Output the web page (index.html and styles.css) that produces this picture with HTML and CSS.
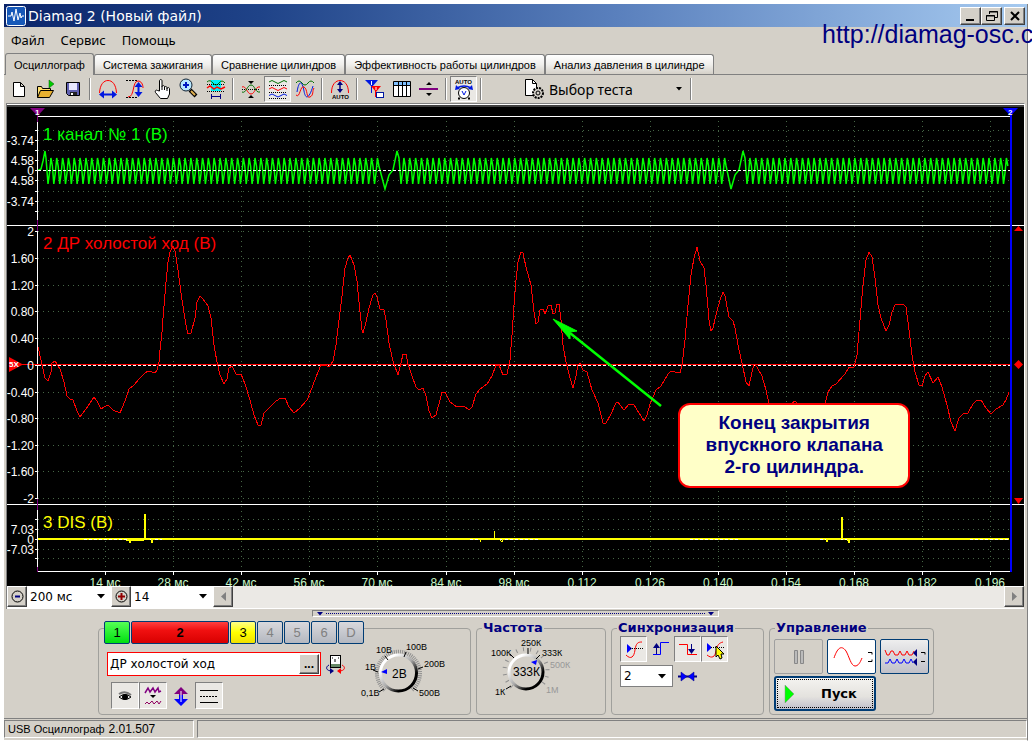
FILE: index.html
```html
<!DOCTYPE html>
<html lang="ru">
<head>
<meta charset="utf-8">
<title>Diamag 2 (Новый файл)</title>
<link rel="stylesheet" href="styles.css">
</head>
<body>
<main class="window">
  <header class="titlebar">
    <svg class="app-icon" width="20" height="20" viewBox="0 0 20 20"><rect x=".5" y=".5" width="19" height="19" rx="2" fill="#1658b8" stroke="#fff"/><path d="M2 10h3l1-4 2 9 2-12 2 11 2-7 1 5 1-2h2" fill="none" stroke="#fff"/></svg>
    <h1 class="title">Diamag 2 (Новый файл)</h1>
    <div class="winbtns">
      <button class="winbtn" aria-label="Свернуть"><svg width="16" height="14"><path d="M3 11h8" stroke="#000" stroke-width="2"/></svg></button>
      <button class="winbtn" aria-label="Восстановить"><svg width="16" height="14" fill="none" stroke="#000"><path d="M5.500 5V2.500h8v6H11M5 3h9M2.500 6.500h8v5h-8zM2 7h9"/></svg></button>
      <button class="winbtn winbtn-close" aria-label="Закрыть"><svg width="16" height="14"><path d="M4 3l8 8M12 3l-8 8" stroke="#000" stroke-width="2"/></svg></button>
    </div>
  </header>
  <a class="site-link" href="#">http://diamag-osc.com</a>

  <nav class="menu">
    <a href="#">Файл</a><a href="#">Сервис</a><a href="#">Помощь</a>
  </nav>

  <div class="tabs" role="tablist">
    <button class="tab tab-active" role="tab" aria-selected="true">Осциллограф</button>
    <button class="tab" role="tab">Система зажигания</button>
    <button class="tab" role="tab">Сравнение цилиндров</button>
    <button class="tab" role="tab">Эффективность работы цилиндров</button>
    <button class="tab" role="tab">Анализ давления в цилиндре</button>
  </div>

  <div class="toolbar">
    <button class="tool" aria-label="Новый"><svg width="22" height="22" viewBox="0 0 22 22"><path d="M5.500 4.500h7l4 4v10h-11zM12.500 4.500v4h4" fill="#fff" stroke="#000"/></svg></button>
    <button class="tool" aria-label="Открыть"><svg width="22" height="22" viewBox="0 0 22 22"><path d="M2.500 19.500v-11h4l1 2h8v3" fill="#ffe070" stroke="#000"/><path d="M2.500 19.500l3-7h13l-4 7z" fill="#e8b030" stroke="#000"/><path d="M14 2l5 4-5 4z" fill="#0c0" stroke="#050" stroke-width=".5"/></svg></button>
    <button class="tool" aria-label="Сохранить"><svg width="22" height="22" viewBox="0 0 22 22"><path d="M4.500 4.500h13v13h-11l-2-2z" fill="#6060b0" stroke="#000"/><path d="M7 5h8v7H7z" fill="#e8e8ff"/><path d="M8 14h7v3H8z" fill="#222"/><path d="M9 15h2v2H9z" fill="#fff"/></svg></button>
    <i class="sep"></i>
    <button class="tool" aria-label="Масштаб по времени"><svg width="22" height="22" viewBox="0 0 22 22" fill="none"><path d="M2.500 15C3 6 7 2.500 11 2.500S19 6 19.500 15" stroke="red"/><path d="M4 16.500h14" stroke="#0018e0" stroke-width="2"/><path d="M2 16.500l5-4v8zM20 16.500l-5-4v8z" fill="#0018e0"/></svg></button>
    <button class="tool" aria-label="Масштаб по уровню"><svg width="22" height="22" viewBox="0 0 22 22" fill="none"><path d="M2 2.500h12M2 19.500h12" stroke="#000" stroke-dasharray="2 1"/><path d="M4 19c7 0 4-16 10-16 3 0 5 3 5 7" stroke="red"/><path d="M14.500 7v9" stroke="#0018e0" stroke-width="2"/><path d="M14.500 4l-4 5h8zM14.500 19l-4-5h8z" fill="#0018e0"/></svg></button>
    <button class="tool" aria-label="Рука"><svg width="22" height="22" viewBox="0 0 22 22"><path d="M8.500 13V3c0-2 2.500-2 2.500 0v6c0-2 2.500-2 2.500 0v1c0-2 2.500-2 2.500 0v1c0-2 2.500-2 2.500 0v5l-2 4.500h-7l-5-6c-1-2 1-3 2-2zM11 9v3M13.500 10v2M16 11v2" fill="#fff" stroke="#000"/></svg></button>
    <button class="tool" aria-label="Лупа"><svg width="22" height="22" viewBox="0 0 22 22"><path d="M12 12l6 6" stroke="#000" stroke-width="4"/><path d="M13 13l4 4" stroke="#e0b050" stroke-width="2"/><circle cx="8" cy="7" r="6" fill="#b8e8ff" stroke="#123"/><path d="M5 7h6M8 4v6" stroke="#0018c0" stroke-width="2"/></svg></button>
    <button class="tool" aria-label="Область"><svg width="22" height="22" viewBox="0 0 22 22" fill="none"><path d="M6 2h10v11H6z" fill="#00f0f8"/><path d="M2 4q3-3 6 1t6 0 6 0" stroke="#007000"/><path d="M2 6.500h18M2 13.500h18" stroke="#000" stroke-dasharray="1 1"/><path d="M2 10l3-2 4 3 3-2 4 2 4-2" stroke="red" stroke-width="1.500"/><path d="M6 18.500h10M6.500 16v5M15.500 16v5" stroke="#000080"/></svg></button>
    <i class="sep"></i>
    <button class="tool" aria-label="Совместить"><svg width="22" height="22" viewBox="0 0 22 22" fill="none"><path d="M8 3h6l-3 3zM8 20h6l-3-3z" fill="#000"/><path d="M2 11.500h18" stroke="#000" stroke-dasharray="1 1"/><path d="M2 9c4-2 5 7 9 7s4-8 9-7" stroke="red"/><path d="M2 14c4 2 5-7 9-7s4 8 9 7" stroke="#007000"/></svg></button>
    <button class="tool tool-pressed" aria-label="Раздельно"><svg width="22" height="22" viewBox="0 0 22 22" fill="none"><path d="M2 4q3-3 6 0t6 0 6 0" stroke="#007000"/><path d="M2 7.500h18M2 14.500h18M2 20.500h18" stroke="#000" stroke-dasharray="1 1"/><path d="M2 11q3-3 6 0t6 0 6 0" stroke="red"/><path d="M2 17.500q3-3 6 0t6 0 6 0" stroke="#0018e0"/></svg></button>
    <button class="tool" aria-label="Наложить"><svg width="22" height="22" viewBox="0 0 22 22" fill="none"><path d="M2 5q3-4 6 0t6 0 6 0" stroke="#007000"/><path d="M3 14c2-12 5-12 7-1s6 5 9-5" stroke="#0018e0"/><path d="M2 17c4 4 4-10 8-8s2 12 6 10 2-6 4-9" stroke="red"/></svg></button>
    <i class="sep"></i>
    <button class="tool" aria-label="Авто"><svg width="22" height="22" viewBox="0 0 22 22" fill="none"><path d="M2.500 15C2.500 6 7 2.500 11 2.500S19.500 6 19.500 15" stroke="red"/><path d="M11 5v8" stroke="#000080" stroke-width="1.500"/><path d="M11 3l-3 4h6zM11 15l-3-4h6z" fill="#000080"/><text x="3" y="21" class="auto-text">AUTO</text></svg></button>
    <i class="sep"></i>
    <button class="tool" aria-label="Маркеры"><svg width="22" height="22" viewBox="0 0 22 22"><path d="M1 2h13L8 9z" fill="#0018e0"/><path d="M7.500 5v10" stroke="#0018e0"/><path d="M7 8h10l-5 6z" fill="red"/><path d="M11.500 10v9" stroke="red"/><path d="M7.500 3v4M12 9v3" stroke="#fff"/><rect x="12.500" y="14.500" width="7" height="5" fill="#fff" stroke="#0018a0"/></svg></button>
    <button class="tool" aria-label="Таблица"><svg width="22" height="22" viewBox="0 0 22 22"><path d="M2.500 3.500h17v15h-17z" fill="#fff" stroke="#000"/><path d="M3 4h16v3H3z" fill="#80c0ff"/><path d="M2 7.500h18M7.500 4v14M11.500 4v14M15.500 4v14" stroke="#000"/></svg></button>
    <button class="tool" aria-label="Разделитель"><svg width="22" height="22" viewBox="0 0 22 22"><path d="M1 11h19" stroke="#800080" stroke-width="2"/><path d="M8 7h6l-3-3zM8 15h6l-3 3z" fill="#000"/></svg></button>
    <i class="sep"></i>
    <button class="tool tool-pressed" aria-label="Авто вольтметр"><svg width="22" height="22" viewBox="0 0 22 22" fill="none"><text x="2" y="6" class="auto-text">AUTO</text><path d="M4 10q7-4 14 0" stroke="#0018e0" stroke-width="1.500"/><path d="M2 12l1-5 4 4zM20 12l-1-5-4 4z" fill="#0018e0"/><circle cx="11" cy="15" r="5.500" fill="#fff" stroke="#000"/><path d="M9 13l2 4 2-4" stroke="#0018e0"/><path d="M5 20.500h2M15 20.500h2" stroke="#000" stroke-width="2"/></svg></button>
    <i class="sep"></i>
    <button class="test-pick"><svg width="22" height="22" viewBox="0 0 22 22"><path d="M2.500 1.500h7l4 4v12h-11z" fill="#fff" stroke="#000"/><path d="M9.500 1.500v4h4" fill="none" stroke="#000"/><circle cx="15" cy="15" r="5" fill="#d4d0c8" stroke="#000" stroke-width="2" stroke-dasharray="2 1"/><circle cx="15" cy="15" r="2" fill="none" stroke="#000"/></svg><span>Выбор теста</span><svg class="test-arrow" width="7" height="4"><path d="M0 0h6L3 3.500z"/></svg></button>
    <i class="sep"></i>
  </div>

  <section class="scope">
    <svg class="plot" viewBox="7 107 1017 479" role="img" aria-label="Осциллограммы">
      <g id="grid"></g>
      <g class="frame">
        <path d="M38 116.500H1010M7 225.500H1024M7 504.500H1024M38 571.500H1010M37.500 121V220M37.500 231V499M37.500 510V567"/>
      </g>
      <g id="ticks"></g>
      <path class="marker-one" d="M30 108H45L37.500 116zM37 116h1v6h-1zM37 220h1v11h-1zM37 499h1v11h-1zM37 567h1v5h-1z"/>
      <text class="marker-num" x="35" y="115">1</text>
      <g class="wave-text">
        <text x="43" y="140" fill="#0f0">1 канал № 1 (В)</text>
        <text x="43" y="249" fill="red">2 ДР холостой ход (В)</text>
        <text x="43" y="528" fill="#ff0">3 DIS (В)</text>
      </g>
      <path id="wave1" class="wave-dense"/>
      <path class="zero" d="M38 170.500H1010"/>
      <path class="zero" d="M38 365.500H1010"/>
      <path class="wave" d="M20 364.500H1010" stroke="red"/>
      <polyline class="wave" stroke="red" points="38,347 41,360 45,378 48,381 51,372 52,363 55,361 60,369 64,382 67,396 70,399 73,400 77,411 80,417 86,409 94,397 97,401 101,409 104,407 108,405 113,410 120,413 125,401 129,389 134,385 140,378 145,373 148,371 152,372 155,373 157,370 159,362 160,350 162,332 163,318 166,282 168,262 170,252 173,246 175,251 178,270 182,300 186,325 188,334 191,333 195,318 197,302 200,296 203,299 208,306 211,318 214,345 217,362 220,375 224,384 227,379 229,368 232,366 236,374 241,374 245,384 250,400 254,415 258,425 261,425 264,413 270,407 276,401 281,398 285,398 289,407 294,413 300,408 307,400 310,393 316,377 321,365 325,365 329,367 333,361 336,345 338,328 342,296 345,268 348,258 350,255 354,265 357,281 360,312 362,330 363,333 366,322 369,308 373,295 375,293 377,297 380,309 384,310 386,320 389,343 393,361 398,375 401,363 403,354 406,354 408,364 411,373 416,387 419,390 423,388 426,396 429,411 432,418 436,415 440,400 442,392 445,392 450,402 457,407 464,406 469,410 472,407 476,394 480,389 487,384 492,376 496,365 499,365 503,375 507,374 510,360 512,335 514,305 516,280 518,262 521,252 523,253 526,267 531,285 534,312 536,324 538,322 540,310 543,309 545,314 547,309 548,306 551,305 553,314 555,313 557,304 559,304 561,320 563,345 566,362 569,374 573,388 576,376 578,365 580,363 583,370 587,372 592,390 598,403 601,415 603,423 606,423 611,414 616,403 618,402 624,410 629,404 634,405 639,413 644,421 647,415 650,404 656,390 661,386 668,374 671,371 675,372 680,373 682,365 685,340 688,305 691,275 694,258 697,247 700,261 704,268 706,285 709,320 711,331 713,328 716,315 720,300 723,292 725,296 729,317 733,321 735,328 738,345 742,363 746,382 749,386 752,372 754,364 757,367 762,376 766,390 769,404 775,412 785,408 795,401 805,412 820,410 825,404 828,392 832,386 836,384 845,374 849,367 854,367 857,355 860,320 863,285 866,260 869,252 872,257 875,278 878,305 881,318 886,331 889,325 892,312 895,305 903,304 906,307 909,330 912,355 915,372 919,385 922,386 925,376 928,372 933,383 938,377 942,387 947,405 951,422 955,431 959,418 963,414 968,413 973,404 977,400 981,400 986,408 991,414 996,409 1003,405 1006,400 1009,392"/>
      <path class="dis" d="M38 539H1009"/>
      <path class="zero" d="M84 539.500H128M150 539.500H162M470 539.500H540M690 539.500H740M820 539.500H850M970 539.500H1009"/>
      <path class="wave" stroke="#ff0" d="M126 540l3 0 1 3 1-3h13l.500-20 .500-6 1 25h3l2-1 1 5 1-4M480 539v3l1-3h13v-8l1 8h4l3 3 1-3M826 539l1 3 1-3h13l1-22 1 21h4l2 5 1-4"/>
      <path class="marker-line" d="M1010.500 108V572"/>
      <path d="M1003 108h15l-7.500 8z" fill="#00f"/>
      <text class="marker-num" x="1008" y="115">2</text>
      <path d="M9 357v15l14-7.500zM1014 231h9l-4.500-5zM1014 364.500l4.500-4.500 4.500 4.500-4.500 4.500zM1014 498h9l-4.500 6z" fill="red"/>
      <text class="marker-num" x="9" y="367">5X</text>
      <g class="axis-y" id="ylabels"></g>
      <g class="axis-x" id="xlabels"></g>
      <path d="M661 406L570 333" stroke="#0f0" stroke-width="2.500"/>
      <path d="M553 319l24 12-7 1 0 7z" fill="#0f0" stroke="#0f0"/>
    </svg>
    <p class="callout">Конец закрытия<br>впускного клапана<br>2-го цилиндра.</p>
  </section>

  <div class="zoombar">
    <button class="zoombtn" aria-label="Уменьшить"><svg width="15" height="15"><circle cx="7.500" cy="7.500" r="5.500" fill="none" stroke="#000"/><path d="M5 7.500h5" stroke="#000080" stroke-width="2"/></svg></button>
    <span class="pick pick-time"><select aria-label="Развёртка"><option>200 мс</option></select><svg width="8" height="5"><path d="M0 0h8L4 4.500z"/></svg></span>
    <button class="zoombtn" aria-label="Увеличить"><svg width="15" height="15"><circle cx="7.500" cy="7.500" r="5.500" fill="none" stroke="#000"/><path d="M4 7.500h7M7.500 4v7" stroke="#900000" stroke-width="2"/></svg></button>
    <span class="pick pick-div"><select aria-label="Цена деления"><option>14</option></select><svg width="8" height="5"><path d="M0 0h8L4 4.500z"/></svg></span>
    <div class="scroll">
      <button class="scrollbtn" aria-label="Влево"><svg width="7" height="9"><path d="M6 0v9L1 4.500z" fill="#808080"/></svg></button>
      <button class="scrollbtn" aria-label="Вправо"><svg width="7" height="9"><path d="M1 0v9l5-4.500z" fill="#808080"/></svg></button>
    </div>
  </div>

  <div class="splitter"><svg width="8" height="4"><path d="M1 0h6L4 3.500z"/></svg><i></i><svg width="8" height="4"><path d="M1 0h6L4 3.500z"/></svg></div>

  <div class="panel">
    <section class="group group-channel" aria-label="Каналы">
      <div class="channels">
        <button class="ch ch-green">1</button><button class="ch ch-red">2</button><button class="ch ch-yellow">3</button><button class="ch" disabled>4</button><button class="ch" disabled>5</button><button class="ch" disabled>6</button><button class="ch" disabled>D</button>
      </div>
      <div class="channel-body">
        <div class="channel-left">
          <div class="name-row">
            <div class="name-box"><input type="text" value="ДР холостой ход" aria-label="Название канала"><button class="dots" aria-label="Выбрать">...</button></div>
            <button class="plain" aria-label="Прибор"><svg width="19" height="20" viewBox="0 0 19 20" fill="none"><rect x="4.500" y="1.500" width="10" height="12" fill="#fff" stroke="#000"/><path d="M5 10h9v3H5z" fill="#686"/><path d="M9 8V5M6 4h1M12 4h1" stroke="#000"/><path d="M3 11c-4 2-3 6 3 6" stroke="#000080"/><path d="M4 14v6l4-3z" fill="#000080"/><path d="M16 11c4 2 3 6-3 6" stroke="red"/><path d="M15 14v6l-4-3z" fill="red"/></svg></button>
          </div>
          <div class="modes">
            <button class="mode mode-on" aria-label="Видимость"><svg width="22" height="22" viewBox="0 0 22 22"><path d="M5 9q6-4 12 1" fill="none" stroke="#777" stroke-width="2"/><path d="M5 12q6-5 12 0-6 5-12 0z" fill="#eee" stroke="#000"/><circle cx="11" cy="12" r="3"/></svg></button>
            <button class="mode mode-on" aria-label="Сглаживание"><svg width="22" height="22" viewBox="0 0 22 22" fill="none"><path d="M3 8l3-5 2 4 3-4 2 4 3-4 1 4 2-1" stroke="#800080" stroke-width="1.500"/><path d="M8 10h6l-3 3z" fill="#000"/><path d="M3 19l2-2 2 2 3-3 2 3 3-3 2 3 2-3" stroke="#900060"/></svg></button>
            <button class="mode" aria-label="Инверсия"><svg width="22" height="22" viewBox="0 0 22 22"><path d="M11 2l-7 7h5v4h4V9h5z" fill="#800080"/><path d="M11 21l-7-7h5v-4h4v4h5z" fill="#00f"/><path d="M11 6v11" stroke="#fff"/></svg></button>
            <button class="mode mode-on" aria-label="Линии"><svg width="22" height="22" viewBox="0 0 22 22"><path d="M2 5.500h18M2 17.500h18" stroke="#000"/><path d="M2 11.500h18" stroke="#000" stroke-dasharray="2 1"/></svg></button>
          </div>
        </div>
        <svg class="knob" width="84" height="62" viewBox="358 640 84 62" role="img" aria-label="Чувствительность 2В">
          <defs><linearGradient id="rim" x1="0" y1="0" x2="1" y2="1"><stop offset=".2" stop-color="#fff"/><stop offset=".5" stop-color="#aaa"/><stop offset=".75" stop-color="#000"/></linearGradient></defs>
          <path d="M385 689A21.500 21.500 0 1 1 412 689" fill="none" stroke="#909090" stroke-width="4" stroke-dasharray="1 1"/>
          <circle cx="398.500" cy="672" r="18" fill="#d4d0c8" stroke="url(#rim)" stroke-width="3"/>
          <path d="M381 671l6-3v5z" fill="#00f"/>
          <path d="M379 691l5-3M373 669l5 2M385 655l3 4M406 651l-2 5M423 666l-5 2M418 690l-5-3" stroke="#000"/>
          <text class="knob-value" x="392" y="677">2В</text>
          <g class="knob-text"><text x="361" y="695">0,1В</text><text x="365" y="669">1В</text><text x="376" y="652">10В</text><text x="406" y="649">100В</text><text x="424" y="666">200В</text><text x="419" y="695">500В</text></g>
        </svg>
      </div>
    </section>

    <fieldset class="group group-freq">
      <legend>Частота</legend>
      <svg class="knob" width="86" height="62" viewBox="488 636 86 62" role="img" aria-label="Частота 333К">
        <path d="M512 687A21.500 21.500 0 1 1 540 687" fill="none" stroke="#909090" stroke-width="4" stroke-dasharray="1 6"/>
        <circle cx="526" cy="672" r="17" fill="#d4d0c8" stroke="url(#rim)" stroke-width="3"/>
        <path d="M531 662l6-2-1 5z" fill="#00f"/>
        <path d="M506 689l5-3M510 654l4 4M528 648v6M540 655l-4 4" stroke="#000"/>
        <text class="knob-value" x="513" y="676">333К</text>
        <g class="knob-text"><text x="495" y="695">1К</text><text x="491" y="656">100К</text><text x="521" y="646">250К</text><text x="542" y="656">333К</text><text class="dim" x="550" y="668">500К</text><text class="dim" x="546" y="693">1М</text></g>
      </svg>
    </fieldset>

    <fieldset class="group group-sync">
      <legend>Синхронизация</legend>
      <div class="sync-row">
        <button class="sync sync-on" aria-label="Уровень"><svg width="22" height="22" viewBox="0 0 22 22" fill="none"><path d="M4 6v9l5-4.500z" fill="#00f"/><path d="M7 10.500h13" stroke="#000" stroke-dasharray="1 1"/><path d="M3 17c5 5 8 2 9-5s3-8 7-8" stroke="red"/></svg></button>
        <button class="sync" aria-label="Фронт"><svg width="22" height="22" viewBox="0 0 22 22" fill="none"><path d="M3 16.500h7.500v-12H19" stroke="#00f"/><path d="M6.500 16V8" stroke="#000080"/><path d="M3 10h7L6.500 5z" fill="#000080"/></svg></button>
        <button class="sync sync-on" aria-label="Спад"><svg width="22" height="22" viewBox="0 0 22 22" fill="none"><path d="M2 6.500h8.500v10H20" stroke="red"/><path d="M14.500 6v6" stroke="#000080"/><path d="M11 11h7l-3.500 5z" fill="#000080"/></svg></button>
        <button class="sync sync-on" aria-label="Выбор уровня"><svg width="22" height="22" viewBox="0 0 22 22" fill="none"><path d="M3 5v9l5-4.500z" fill="#00f"/><path d="M7 9.500h13" stroke="#000" stroke-dasharray="1 1"/><path d="M3 17c5 4 8 2 9-4s3-8 7-9" stroke="red"/><path d="M12 8v11l2-2 2 4 2-1-1-4h3z" fill="#ff0" stroke="#000"/></svg></button>
      </div>
      <div class="sync-row sync-second">
        <span class="pick pick-sync"><select aria-label="Канал синхронизации"><option>2</option></select><svg width="8" height="5"><path d="M0 0h8L4 4.500z"/></svg></span>
        <button class="plain" aria-label="Центр"><svg width="19" height="11"><path d="M0 5.500h19" stroke="#000080" stroke-width="2"/><path d="M3 1v9l6-4.500zM16 1v9l-6-4.500z" fill="#00f" stroke="#000080" stroke-width=".5"/></svg></button>
      </div>
    </fieldset>

    <fieldset class="group group-control">
      <legend>Управление</legend>
      <div class="run-row">
        <button class="run" disabled aria-label="Пауза"><svg width="12" height="16"><path d="M1.500 1.500h3v13h-3zM7.500 1.500h3v13h-3z" fill="#bbb" stroke="#888"/></svg></button>
        <button class="run run-white" aria-label="Синус"><svg width="42" height="24" fill="none"><path d="M3 13C6 4 10-1 15 6c3 5 5 15 9 15 3 0 5-3 7-8" stroke="red"/><path d="M37 7.500h4v2M37 16.500h4v-2" stroke="#000"/></svg></button>
        <button class="run run-grad" aria-label="Две волны"><svg width="42" height="24" fill="none"><path d="M1 5l2 5 2 0 2-4 2 0 2 4 3 0 2-4 2 4 3 0 2-4 2 4 3 0 2-4" stroke="red"/><path d="M1 18h3l2-4 2 4h3l2-4 2 4h3l2-4 2 4h3l2-4 2 4" stroke="#00f"/><path d="M29 8l4-4v8zM29 17l4-4v8z" fill="#000080"/><path d="M37 7.500h4v2M37 16.500h4" stroke="#000"/></svg></button>
      </div>
      <button class="start"><svg width="11" height="20"><path d="M1 1v18l9-9z" fill="#0f0" stroke="#888" stroke-width=".5"/></svg><span>Пуск</span></button>
    </fieldset>
  </div>

  <footer class="status">
    <div class="status-cell status-name"><span>USB Осциллограф</span><span class="ver">2.01.507</span></div>
    <div class="status-cell status-rest"></div>
  </footer>
</main>
<script src="plot.js"></script>
</body>
</html>
```
FILE: styles.css
```css
* { box-sizing: border-box; }
body { margin: 0; padding: 4px 4px 0; background: #fff; font-family: "Liberation Sans", Arial, sans-serif; font-size: 12px; color: #000; overflow-x: hidden; }
button, input, select { font: inherit; color: inherit; margin: 0; padding: 0; border: 0; border-radius: 0; background: none; }
svg { display: block; flex: none; }
.window { background: #d4d0c8; border-right: 1px solid #808080; border-bottom: 1px solid #fff; position: relative; padding-bottom: 2px; }

.titlebar { display: flex; align-items: center; height: 23px; padding: 0 2px; background: linear-gradient(90deg, #0a246a, #1f4388 25%, #5a80bd 60%, #a6caf0); }
.title { margin: 0 auto 0 2px; font: 14px "DejaVu Sans", sans-serif; color: #fff; }
.winbtns { display: flex; }
.winbtn { width: 21px; height: 18px; background: #d4d0c8; border: 1px solid; border-color: #fff #404040 #404040 #fff; box-shadow: inset -1px -1px #808080; display: flex; align-items: center; justify-content: center; }
.winbtn-close { margin-left: 2px; }
.site-link { position: absolute; left: 818px; top: 16px; font-size: 25px; line-height: 28px; color: #000080; text-decoration: none; white-space: nowrap; }

.menu { display: flex; gap: 16px; height: 26px; align-items: center; padding-left: 7px; font: 13px "Noto Sans", sans-serif; }
.menu a { color: #000; text-decoration: none; }

.tabs { display: flex; align-items: flex-end; height: 22px; padding-left: 1px; border-bottom: 1px solid #808080; font-size: 11px; }
.tab { height: 20px; padding: 0 8px; border: 1px solid #808080; border-bottom: 0; border-radius: 3px 3px 0 0; background: linear-gradient(#fff, #f0efec 50%, #d4d0c8); white-space: nowrap; }
.tab-active { height: 22px; margin-bottom: -1px; background: #d4d0c8; }

.toolbar { display: flex; align-items: center; height: 28px; padding-left: 1px; }
.tool { width: 27px; height: 26px; display: flex; align-items: center; justify-content: center; }
.tool-pressed { border: 1px solid; border-color: #808080 #fff #fff #808080; background: #eae8e4; }
.sep { width: 2px; height: 22px; margin: 0 3px; border-left: 1px solid #808080; border-right: 1px solid #fff; }
.auto-text { font: bold 6px "Liberation Sans", sans-serif; fill: #000; }
.test-pick { display: flex; align-items: center; gap: 4px; width: 164px; margin-left: 38px; font: 14px "Noto Sans", sans-serif; white-space: nowrap; }
.test-arrow { margin-left: auto; margin-right: 4px; }

.scope { position: relative; margin: 0 2px; border-top: 1px solid #808080; border-left: 1px solid #808080; border-right: 1px solid #fff; padding-top: 3px; background: linear-gradient(#fff 0 1px, #404040 1px 3px, #000 3px); }
.plot { width: 100%; height: auto; background: #000; overflow: hidden; fill: none; }
.grid-line { stroke: #466646; stroke-dasharray: 1 4; shape-rendering: crispEdges; }
.frame, .tick { stroke: #fff; }
.marker-one { fill: #800080; }
.marker-num { font: bold 8px "Liberation Sans", sans-serif; fill: #fff; }
.marker-line { stroke: #00f; stroke-width: 2; shape-rendering: crispEdges; }
.wave-text { font-size: 17px; }
.wave { stroke-width: 1; shape-rendering: crispEdges; }
.wave-dense { stroke: #0f0; stroke-width: 1.5; }
.zero { stroke: #fff; stroke-dasharray: 3 2; shape-rendering: crispEdges; }
.dis { stroke: #ff0; stroke-width: 2; }
.axis-y { fill: #fff; font-size: 12px; text-anchor: end; }
.axis-x { fill: #c8f8c8; font-size: 12px; text-anchor: middle; }
.callout { position: absolute; left: 66%; top: 62%; width: 232px; margin: 0; padding: 7px 4px 8px; border: 2px solid red; border-radius: 12px; background: #ffffc8; color: #000080; font-size: 19px; font-weight: bold; line-height: 22px; text-align: center; }

.zoombar { display: flex; height: 23px; margin: 0 3px 0 2px; background: #fff; border-left: 1px solid #808080; }
.zoombtn, .scrollbtn { width: 20px; height: 21px; display: flex; align-items: center; justify-content: center; background: #d4d0c8; border: 1px solid; border-color: #fff #404040 #404040 #fff; box-shadow: inset -1px -1px #808080; }
.pick { display: grid; grid-template-columns: 1fr; align-items: center; background: #fff; }
.pick select { grid-area: 1 / 1; appearance: none; width: 100%; height: 100%; padding-left: 3px; font: 12px "DejaVu Sans", sans-serif; outline: 0; }
.pick svg { grid-area: 1 / 1; justify-self: end; margin-right: 6px; pointer-events: none; }
.pick-time { width: 84px; height: 21px; }
.pick-div { width: 82px; height: 21px; }
.scroll { flex: 1; display: flex; justify-content: space-between; background: #ebe9e5; margin-bottom: 1px; }

.splitter { display: flex; align-items: center; width: 407px; height: 7px; margin: 1px 0 0 308px; border: 1px solid #808080; border-right-color: #fff; border-bottom-color: #fff; padding: 0 3px; fill: #000080; }
.splitter i { flex: 1; margin: 0 2px; border-top: 1px dotted #000080; }

.panel { display: flex; gap: 5px; align-items: stretch; padding: 3px 0 3px 94px; height: 101px; }
.group { margin: 0; padding: 0; border: 1px solid #a0a09c; border-radius: 4px; min-width: 0; }
.group legend { padding: 0 1px; margin-left: 5px; font: bold 13px "DejaVu Sans", sans-serif; line-height: 16px; color: #000080; }
.group-channel { width: 373px; margin-top: 8px; }
.group-freq { width: 130px; }
.group-sync { width: 153px; }
.group-control { width: 165px; }
.channels { display: flex; width: 260px; margin: -8px 0 0 5px; background: #d4d0c8; gap: 1px; }
.ch { width: 26px; height: 23px; border: 1px solid #003c74; border-radius: 2px; background: linear-gradient(#d8d8dc, #b4b8c0); color: #808080; font-size: 13px; }
.ch-green { background: linear-gradient(#5f5, #00e010); color: #000; }
.ch-red { flex: 1; background: linear-gradient(#ff4040, #f01010 40%, #d80000); color: #000; font-weight: bold; }
.ch-yellow { background: linear-gradient(#ff8, #ff0 50%, #f0e000); color: #000; }
.channel-body { display: flex; }
.channel-left { width: 246px; padding: 8px 0 0 8px; }
.name-row { display: flex; align-items: center; gap: 5px; }
.name-box { display: flex; width: 218px; height: 24px; border: 1px solid red; background: #fff; padding: 1px; }
.name-box input { flex: 1; min-width: 0; padding-left: 1px; font: 12px "DejaVu Sans", sans-serif; outline: 0; }
.dots { width: 20px; background: #d4d0c8; border: 1px solid; border-color: #fff #404040 #404040 #fff; box-shadow: inset -1px -1px #808080; font-weight: bold; line-height: 12px; }
.plain { display: flex; align-items: center; }
.modes { display: flex; margin: 6px 0 0 4px; }
.mode { width: 28px; height: 27px; display: flex; align-items: center; justify-content: center; }
.mode-on, .sync-on { background: #eae8e4; border: 1px solid; border-color: #808080 #fff #fff #808080; }
.knob { overflow: visible; }
.channel-body .knob { margin: -3px 0 0 13px; }
.group-freq .knob { margin-left: 11px; }
.knob-value { font: 12px "Liberation Sans", sans-serif; }
.knob-text { font: 9px "Liberation Sans", sans-serif; }
.dim { fill: #989898; }
.sync-row { display: flex; align-items: center; padding-left: 8px; }
.sync { width: 27px; height: 26px; display: flex; align-items: center; justify-content: center; }
.sync-second { margin-top: 3px; gap: 5px; }
.pick-sync { width: 53px; height: 22px; border: 1px solid #808080; }
.run-row { display: flex; gap: 4px; padding: 3px 0 0 4px; }
.run { width: 49px; height: 35px; display: flex; align-items: center; justify-content: center; border: 1px solid #a0a0a0; border-radius: 2px; }
.run-white { background: #fff; border-color: #003c74; }
.run-grad { background: linear-gradient(#eee, #c0c0c8); border-color: #003c74; }
.start { display: flex; align-items: center; width: 102px; height: 35px; margin: 2px 0 0 4px; padding-left: 8px; gap: 26px; border: 2px solid #003c74; border-radius: 3px; background: linear-gradient(#f4f3f0, #e4e2de 60%, #c0c0cc); outline: 1px dotted #000; outline-offset: -4px; font: bold 13px "DejaVu Sans", sans-serif; }

.status { display: flex; gap: 3px; height: 20px; border-top: 1px solid #808080; padding-top: 1px; }
.status-cell { border: 1px solid; border-color: #808080 #fff #fff #808080; }
.status-name { width: 190px; display: flex; align-items: center; gap: 4px; padding-left: 3px; font-size: 11px; white-space: nowrap; }
.ver { font-size: 12px; }
.status-rest { flex: 1; }
```
FILE: plot.js
```js
const NS = 'http://www.w3.org/2000/svg';
function add(parentId, tag, attrs, text) {
  const el = document.createElementNS(NS, tag);
  for (const key in attrs) el.setAttribute(key, attrs[key]);
  if (text) el.textContent = text;
  document.getElementById(parentId).appendChild(el);
}

// Grid: vertical lines every 14 ms, horizontal lines per channel
const times = ['14 мс', '28 мс', '42 мс', '56 мс', '70 мс', '84 мс', '98 мс', '0.112', '0.126', '0.140', '0.154', '0.168', '0.182', '0.196'];
times.forEach((label, i) => {
  const x = Math.round(105 + i * 68.1);
  add('grid', 'path', { class: 'grid-line', d: `M${x}.5 121V571` });
  add('ticks', 'path', { class: 'tick', d: `M${x}.5 572v3` });
  add('xlabels', 'text', { x, y: 587 }, label);
});
const rows = [130, 140, 150, 160, 170, 180, 191, 201, 211, 231, 258, 285, 311, 338, 365, 392, 418, 445, 471, 498, 519, 529, 539, 549, 558];
rows.forEach(y => {
  add('grid', 'path', { class: 'grid-line', d: `M38 ${y}.5H1010` });
  add('ticks', 'path', { class: 'tick', d: `M35 ${y}.5h3` });
});
[[140, '-3.74'], [160, '4.58'], [170, '0'], [180, '4.58'], [201, '-3.74'],
 [231, '2'], [258, '1.60'], [285, '1.20'], [311, '0.80'], [338, '0.40'], [365, '0'],
 [392, '-0.40'], [418, '-0.80'], [445, '-1.20'], [471, '-1.60'], [498, '-2'],
 [529, '7.03'], [539, '0'], [549, '-7.03']
].forEach(([y, label]) => add('ylabels', 'text', { x: 34, y: y + 5 }, label));

// Crankshaft sensor signal: runs of teeth separated by a two-tooth gap
const PERIOD = 5.83;
function teeth(from, to) {
  let run = '';
  for (let x = from; x + PERIOD <= to; x += PERIOD) {
    run += `L${x.toFixed(1)} 184L${(x + 1.5).toFixed(1)} 173L${(x + 2.9).toFixed(1)} 158L${(x + 4.4).toFixed(1)} 166`;
  }
  return run;
}
const gap = x => `L${x} 189L${x + 4} 175L${x + 8} 170L${x + 12} 151L${x + 14} 158`;
const d = 'M38 170.500L41 169L43 161L45 151L46 158' + teeth(48, 385) + gap(385) + teeth(401, 731) + gap(731) + teeth(747, 1011);
document.getElementById('wave1').setAttribute('d', d);
```
